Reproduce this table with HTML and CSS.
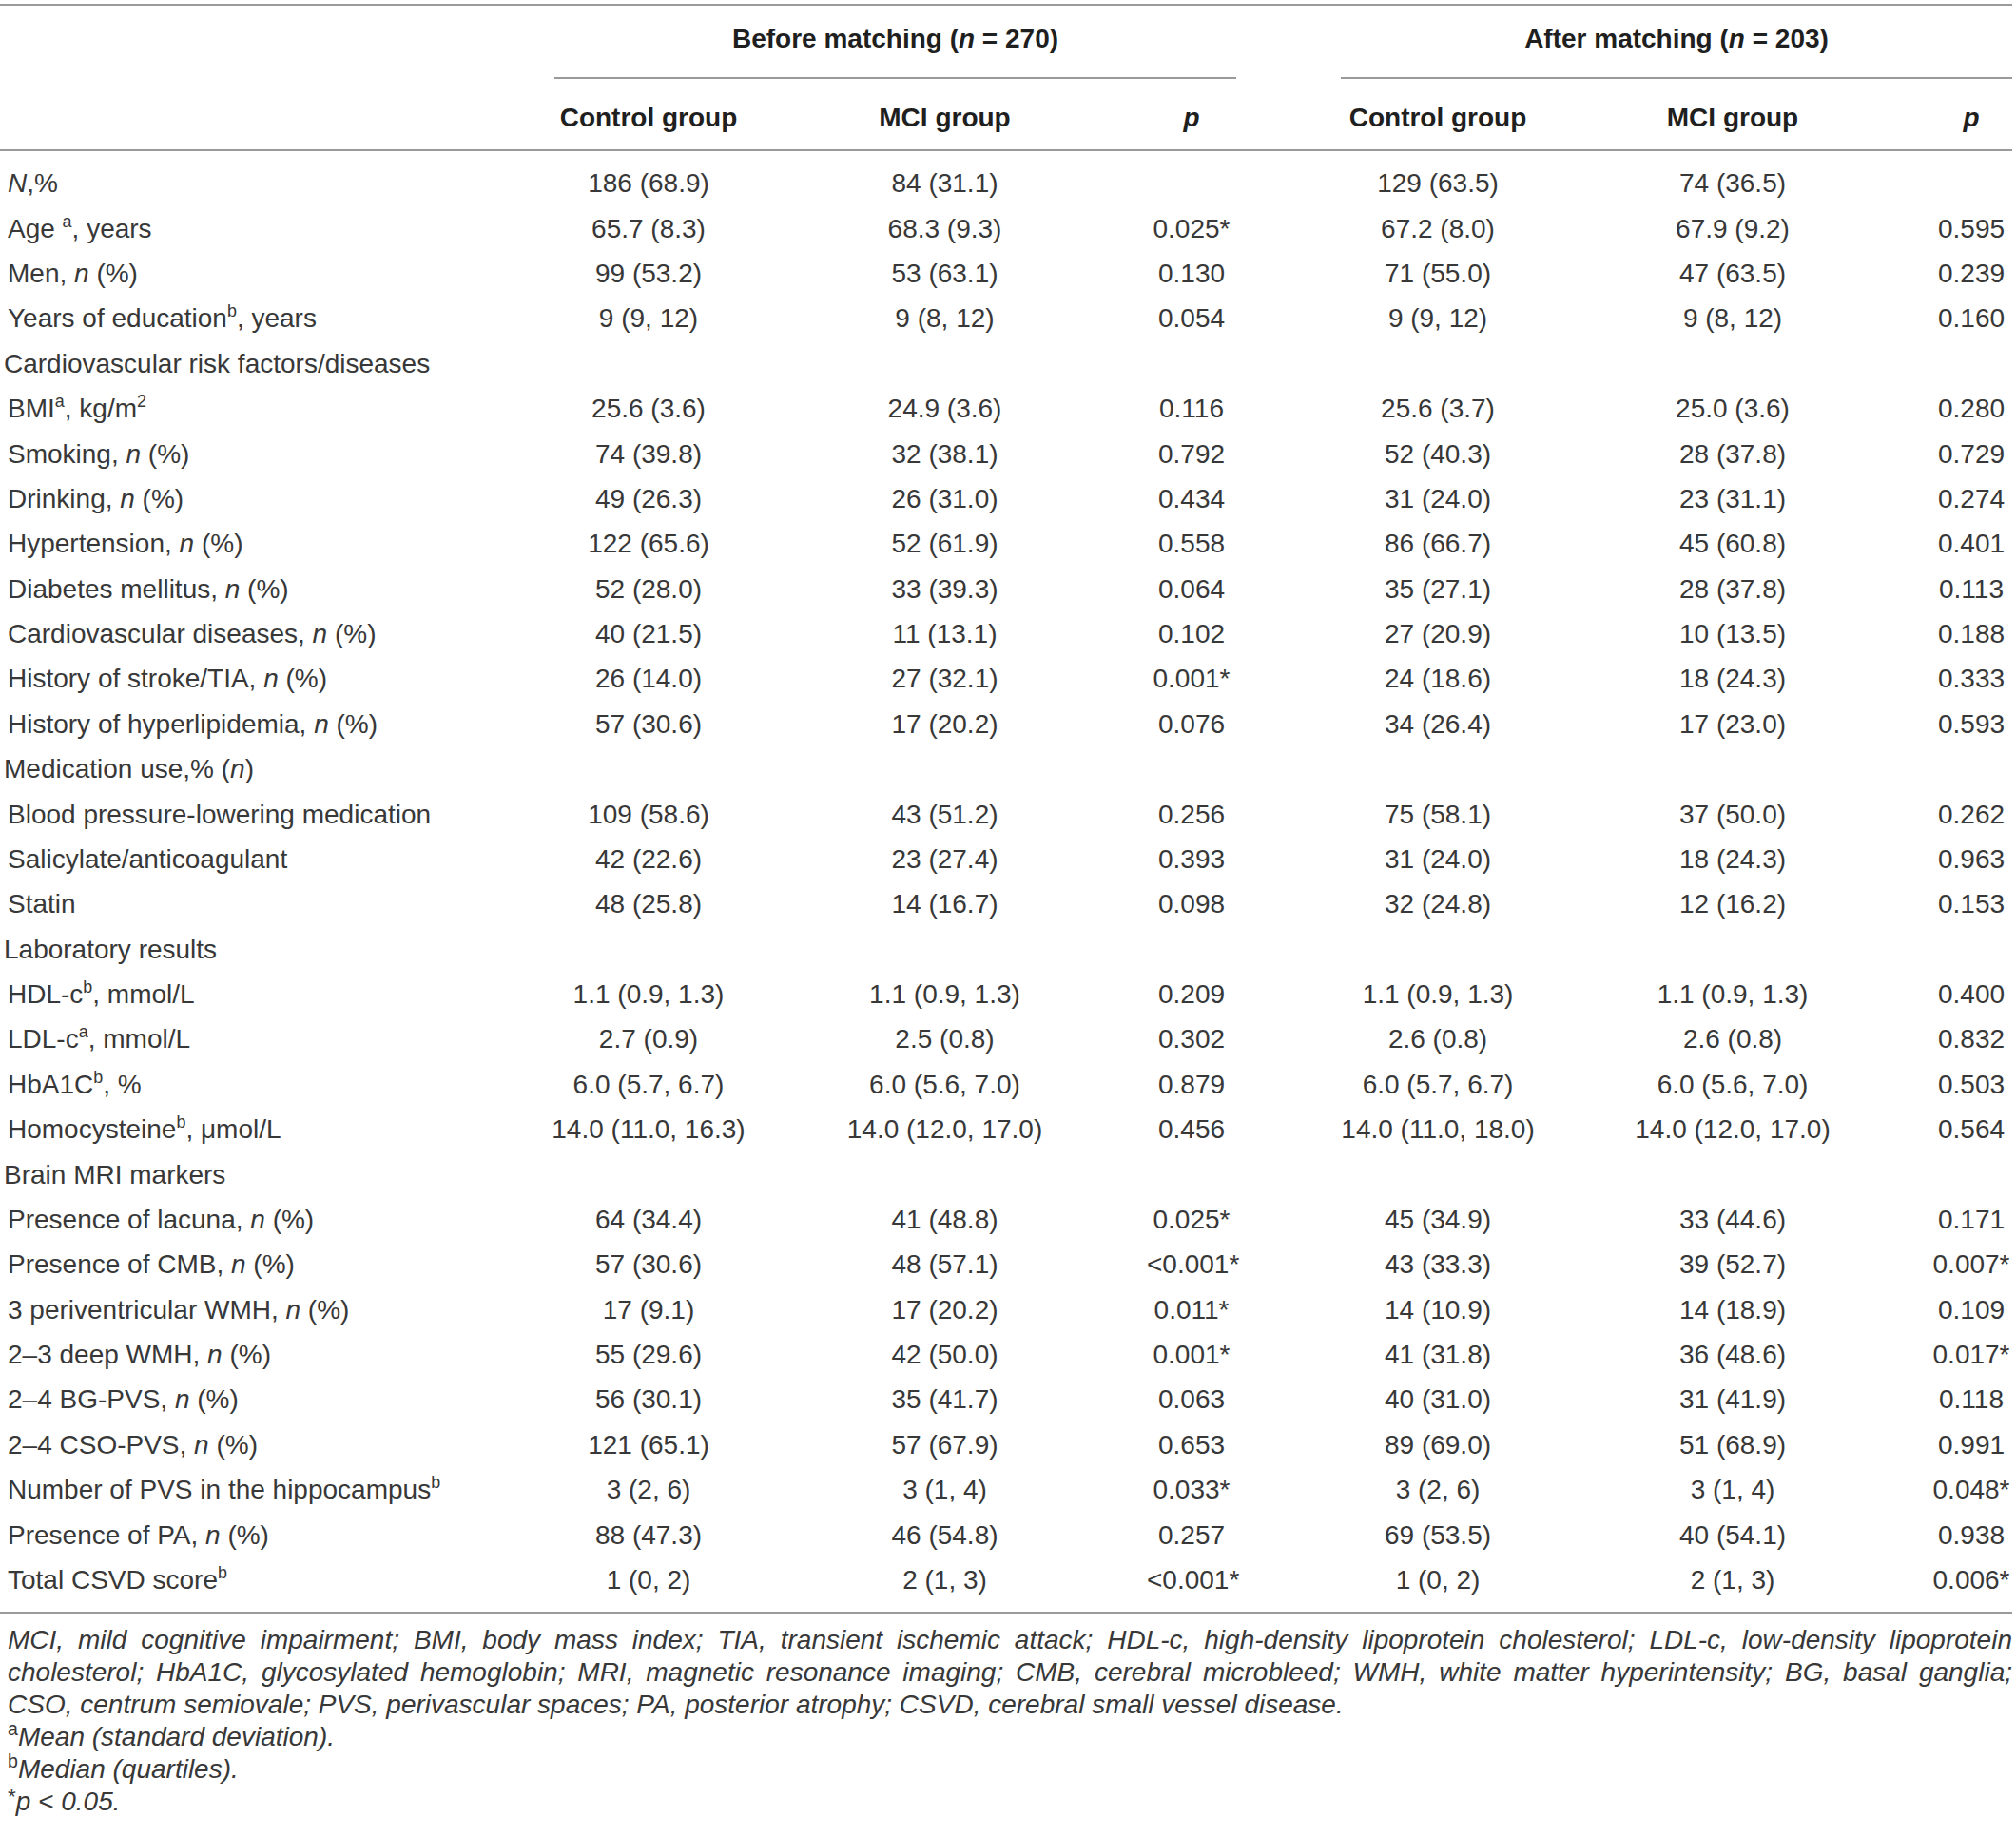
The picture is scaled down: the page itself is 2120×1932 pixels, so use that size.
FILE: index.html
```html
<!DOCTYPE html>
<html lang="en">
<head>
<meta charset="utf-8">
<title>Table</title>
<link rel="stylesheet" href="styles.css">
</head>
<body>
<div class="wrap">
<table class="t">
<colgroup>
<col class="c-lab"><col class="c-1"><col class="c-2"><col class="c-3"><col class="c-gap"><col class="c-4"><col class="c-5"><col class="c-6">
</colgroup>
<thead>
<tr class="grp">
<th></th>
<th colspan="3" class="span">Before matching (<i>n</i> = 270)</th>
<th></th>
<th colspan="3" class="span">After matching (<i>n</i> = 203)</th>
</tr>
<tr class="cols">
<th></th>
<th>Control group</th>
<th>MCI group</th>
<th><i>p</i></th>
<th></th>
<th>Control group</th>
<th>MCI group</th>
<th><i>p</i></th>
</tr>
</thead>
<tbody>
<tr><td class="lab"><i>N</i>,%</td><td>186 (68.9)</td><td>84 (31.1)</td><td></td><td></td><td>129 (63.5)</td><td>74 (36.5)</td><td></td></tr>
<tr><td class="lab">Age <sup>a</sup>, years</td><td>65.7 (8.3)</td><td>68.3 (9.3)</td><td>0.025*</td><td></td><td>67.2 (8.0)</td><td>67.9 (9.2)</td><td>0.595</td></tr>
<tr><td class="lab">Men, <i>n</i> (%)</td><td>99 (53.2)</td><td>53 (63.1)</td><td>0.130</td><td></td><td>71 (55.0)</td><td>47 (63.5)</td><td>0.239</td></tr>
<tr><td class="lab">Years of education<sup>b</sup>, years</td><td>9 (9, 12)</td><td>9 (8, 12)</td><td>0.054</td><td></td><td>9 (9, 12)</td><td>9 (8, 12)</td><td>0.160</td></tr>
<tr><td class="lab sec">Cardiovascular risk factors/diseases</td><td></td><td></td><td></td><td></td><td></td><td></td><td></td></tr>
<tr><td class="lab">BMI<sup>a</sup>, kg/m<sup>2</sup></td><td>25.6 (3.6)</td><td>24.9 (3.6)</td><td>0.116</td><td></td><td>25.6 (3.7)</td><td>25.0 (3.6)</td><td>0.280</td></tr>
<tr><td class="lab">Smoking, <i>n</i> (%)</td><td>74 (39.8)</td><td>32 (38.1)</td><td>0.792</td><td></td><td>52 (40.3)</td><td>28 (37.8)</td><td>0.729</td></tr>
<tr><td class="lab">Drinking, <i>n</i> (%)</td><td>49 (26.3)</td><td>26 (31.0)</td><td>0.434</td><td></td><td>31 (24.0)</td><td>23 (31.1)</td><td>0.274</td></tr>
<tr><td class="lab">Hypertension, <i>n</i> (%)</td><td>122 (65.6)</td><td>52 (61.9)</td><td>0.558</td><td></td><td>86 (66.7)</td><td>45 (60.8)</td><td>0.401</td></tr>
<tr><td class="lab">Diabetes mellitus, <i>n</i> (%)</td><td>52 (28.0)</td><td>33 (39.3)</td><td>0.064</td><td></td><td>35 (27.1)</td><td>28 (37.8)</td><td>0.113</td></tr>
<tr><td class="lab">Cardiovascular diseases, <i>n</i> (%)</td><td>40 (21.5)</td><td>11 (13.1)</td><td>0.102</td><td></td><td>27 (20.9)</td><td>10 (13.5)</td><td>0.188</td></tr>
<tr><td class="lab">History of stroke/TIA, <i>n</i> (%)</td><td>26 (14.0)</td><td>27 (32.1)</td><td>0.001*</td><td></td><td>24 (18.6)</td><td>18 (24.3)</td><td>0.333</td></tr>
<tr><td class="lab">History of hyperlipidemia, <i>n</i> (%)</td><td>57 (30.6)</td><td>17 (20.2)</td><td>0.076</td><td></td><td>34 (26.4)</td><td>17 (23.0)</td><td>0.593</td></tr>
<tr><td class="lab sec">Medication use,% (<i>n</i>)</td><td></td><td></td><td></td><td></td><td></td><td></td><td></td></tr>
<tr><td class="lab">Blood pressure-lowering medication</td><td>109 (58.6)</td><td>43 (51.2)</td><td>0.256</td><td></td><td>75 (58.1)</td><td>37 (50.0)</td><td>0.262</td></tr>
<tr><td class="lab">Salicylate/anticoagulant</td><td>42 (22.6)</td><td>23 (27.4)</td><td>0.393</td><td></td><td>31 (24.0)</td><td>18 (24.3)</td><td>0.963</td></tr>
<tr><td class="lab">Statin</td><td>48 (25.8)</td><td>14 (16.7)</td><td>0.098</td><td></td><td>32 (24.8)</td><td>12 (16.2)</td><td>0.153</td></tr>
<tr><td class="lab sec">Laboratory results</td><td></td><td></td><td></td><td></td><td></td><td></td><td></td></tr>
<tr><td class="lab">HDL-c<sup>b</sup>, mmol/L</td><td>1.1 (0.9, 1.3)</td><td>1.1 (0.9, 1.3)</td><td>0.209</td><td></td><td>1.1 (0.9, 1.3)</td><td>1.1 (0.9, 1.3)</td><td>0.400</td></tr>
<tr><td class="lab">LDL-c<sup>a</sup>, mmol/L</td><td>2.7 (0.9)</td><td>2.5 (0.8)</td><td>0.302</td><td></td><td>2.6 (0.8)</td><td>2.6 (0.8)</td><td>0.832</td></tr>
<tr><td class="lab">HbA1C<sup>b</sup>, %</td><td>6.0 (5.7, 6.7)</td><td>6.0 (5.6, 7.0)</td><td>0.879</td><td></td><td>6.0 (5.7, 6.7)</td><td>6.0 (5.6, 7.0)</td><td>0.503</td></tr>
<tr><td class="lab">Homocysteine<sup>b</sup>, μmol/L</td><td><span class="w">14.0 (11.0, 16.3)</span></td><td>14.0 (12.0, 17.0)</td><td>0.456</td><td></td><td><span class="w">14.0 (11.0, 18.0)</span></td><td>14.0 (12.0, 17.0)</td><td>0.564</td></tr>
<tr><td class="lab sec">Brain MRI markers</td><td></td><td></td><td></td><td></td><td></td><td></td><td></td></tr>
<tr><td class="lab">Presence of lacuna, <i>n</i> (%)</td><td>64 (34.4)</td><td>41 (48.8)</td><td>0.025*</td><td></td><td>45 (34.9)</td><td>33 (44.6)</td><td>0.171</td></tr>
<tr><td class="lab">Presence of CMB, <i>n</i> (%)</td><td>57 (30.6)</td><td>48 (57.1)</td><td>&lt;0.001*</td><td></td><td>43 (33.3)</td><td>39 (52.7)</td><td>0.007*</td></tr>
<tr><td class="lab">3 periventricular WMH, <i>n</i> (%)</td><td>17 (9.1)</td><td>17 (20.2)</td><td>0.011*</td><td></td><td>14 (10.9)</td><td>14 (18.9)</td><td>0.109</td></tr>
<tr><td class="lab">2–3 deep WMH, <i>n</i> (%)</td><td>55 (29.6)</td><td>42 (50.0)</td><td>0.001*</td><td></td><td>41 (31.8)</td><td>36 (48.6)</td><td>0.017*</td></tr>
<tr><td class="lab">2–4 BG-PVS, <i>n</i> (%)</td><td>56 (30.1)</td><td>35 (41.7)</td><td>0.063</td><td></td><td>40 (31.0)</td><td>31 (41.9)</td><td>0.118</td></tr>
<tr><td class="lab">2–4 CSO-PVS, <i>n</i> (%)</td><td>121 (65.1)</td><td>57 (67.9)</td><td>0.653</td><td></td><td>89 (69.0)</td><td>51 (68.9)</td><td>0.991</td></tr>
<tr><td class="lab">Number of PVS in the hippocampus<sup>b</sup></td><td>3 (2, 6)</td><td>3 (1, 4)</td><td>0.033*</td><td></td><td>3 (2, 6)</td><td>3 (1, 4)</td><td>0.048*</td></tr>
<tr><td class="lab">Presence of PA, <i>n</i> (%)</td><td>88 (47.3)</td><td>46 (54.8)</td><td>0.257</td><td></td><td>69 (53.5)</td><td>40 (54.1)</td><td>0.938</td></tr>
<tr><td class="lab">Total CSVD score<sup>b</sup></td><td>1 (0, 2)</td><td>2 (1, 3)</td><td>&lt;0.001*</td><td></td><td>1 (0, 2)</td><td>2 (1, 3)</td><td>0.006*</td></tr>
</tbody>
</table>
<div class="notes">
<p class="abbr"><span class="jl">MCI, mild cognitive impairment; BMI, body mass index; TIA, transient ischemic attack; HDL-c, high-density lipoprotein cholesterol; LDL-c, low-density lipoprotein</span><span class="jl">cholesterol; HbA1C, glycosylated hemoglobin; MRI, magnetic resonance imaging; CMB, cerebral microbleed; WMH, white matter hyperintensity; BG, basal ganglia;</span><span class="ll">CSO, centrum semiovale; PVS, perivascular spaces; PA, posterior atrophy; CSVD, cerebral small vessel disease.</span></p>
<p class="fn"><sup>a</sup>Mean (standard deviation).</p>
<p class="fn"><sup>b</sup>Median (quartiles).</p>
<p class="fn"><sup class="ast">*</sup>p &lt; 0.05.</p>
</div>
</div>
</body>
</html>
```
FILE: styles.css
```css
html, body {
  margin: 0;
  padding: 0;
  background: #ffffff;
}

body {
  font-family: "Liberation Sans", Arial, sans-serif;
  color: #383838;
  width: 2120px;
}

.wrap {
  width: 2116px;
  padding-top: 4px;
}

.t {
  width: 2116px;
  table-layout: fixed;
  border-collapse: separate;
  border-spacing: 0;
  font-size: 28px;
}

.c-lab { width: 583px; }
.c-1 { width: 198px; }
.c-2 { width: 425px; }
.c-3 { width: 94px; }
.c-gap { width: 110px; }
.c-4 { width: 204px; }
.c-5 { width: 416px; }
.c-6 { width: 86px; }

.t th,
.t td {
  padding: 7.2px 0;
  line-height: 33px;
  text-align: center;
  white-space: nowrap;
  font-weight: normal;
  vertical-align: top;
}

.t thead th {
  font-weight: bold;
  color: #1f1f1f;
  line-height: 32px;
}

.t thead i {
  font-style: italic;
}

.t .grp th {
  border-top: 2px solid #9a9a9a;
  padding: 19px 0 24px;
}

.t .grp th.span {
  border-bottom: 2px solid #9a9a9a;
}

.t .cols th {
  padding: 25px 0 17px;
  border-bottom: 2px solid #9a9a9a;
}

.t tbody tr:first-child td {
  padding-top: 17.3px;
}

.t tbody tr:last-child td {
  padding-bottom: 17.3px;
  border-bottom: 2px solid #9a9a9a;
}

.t td.lab {
  text-align: left;
  padding-left: 8px;
}

.t td.sec {
  padding-left: 4px;
}

sup {
  font-size: 0.64em;
  line-height: 0;
  vertical-align: 0.62em;
  font-style: normal;
}

.w {
  display: inline-block;
  margin: 0 -24px;
}

.notes {
  padding-left: 8px;
  padding-top: 11px;
  font-size: 28px;
  line-height: 34px;
  font-style: italic;
  color: #383838;
}

.notes p {
  margin: 0;
}

.jl {
  display: block;
  text-align: justify;
  text-align-last: justify;
}

.ll {
  display: block;
  text-align: left;
}

.fn sup {
  font-style: normal;
  font-size: 0.7em;
  vertical-align: 0.55em;
}

.fn sup.ast {
  font-size: 0.8em;
  vertical-align: 0.3em;
}
```
